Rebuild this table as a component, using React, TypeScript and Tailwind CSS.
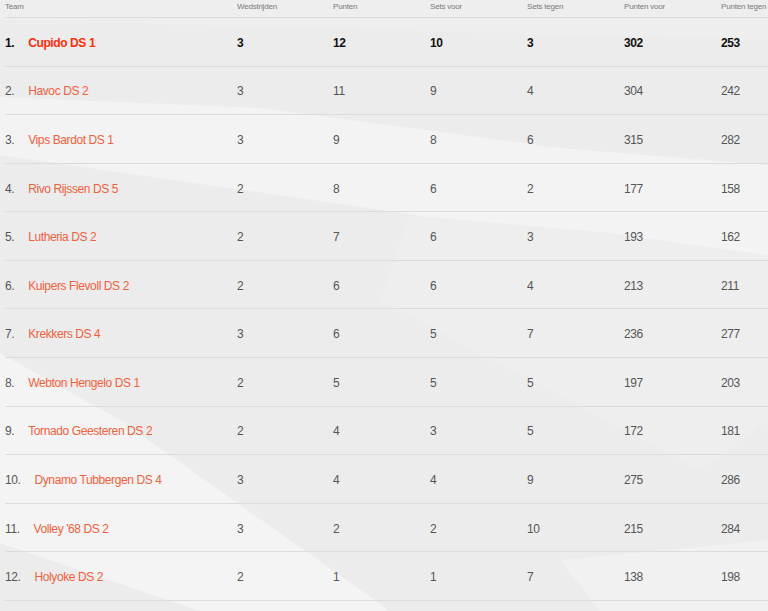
import React from 'react';

interface Row {
    pos: number;
    team: string;
    played: number;
    points: number;
    setsFor: number;
    setsAgainst: number;
    ptsFor: number;
    ptsAgainst: number;
}

const rows: Row[] = [
    { pos: 1, team: 'Cupido DS 1', played: 3, points: 12, setsFor: 10, setsAgainst: 3, ptsFor: 302, ptsAgainst: 253 },
    { pos: 2, team: 'Havoc DS 2', played: 3, points: 11, setsFor: 9, setsAgainst: 4, ptsFor: 304, ptsAgainst: 242 },
    { pos: 3, team: 'Vips Bardot DS 1', played: 3, points: 9, setsFor: 8, setsAgainst: 6, ptsFor: 315, ptsAgainst: 282 },
    { pos: 4, team: 'Rivo Rijssen DS 5', played: 2, points: 8, setsFor: 6, setsAgainst: 2, ptsFor: 177, ptsAgainst: 158 },
    { pos: 5, team: 'Lutheria DS 2', played: 2, points: 7, setsFor: 6, setsAgainst: 3, ptsFor: 193, ptsAgainst: 162 },
    { pos: 6, team: 'Kuipers Flevoll DS 2', played: 2, points: 6, setsFor: 6, setsAgainst: 4, ptsFor: 213, ptsAgainst: 211 },
    { pos: 7, team: 'Krekkers DS 4', played: 3, points: 6, setsFor: 5, setsAgainst: 7, ptsFor: 236, ptsAgainst: 277 },
    { pos: 8, team: 'Webton Hengelo DS 1', played: 2, points: 5, setsFor: 5, setsAgainst: 5, ptsFor: 197, ptsAgainst: 203 },
    { pos: 9, team: 'Tornado Geesteren DS 2', played: 2, points: 4, setsFor: 3, setsAgainst: 5, ptsFor: 172, ptsAgainst: 181 },
    { pos: 10, team: 'Dynamo Tubbergen DS 4', played: 3, points: 4, setsFor: 4, setsAgainst: 9, ptsFor: 275, ptsAgainst: 286 },
    { pos: 11, team: "Volley '68 DS 2", played: 3, points: 2, setsFor: 2, setsAgainst: 10, ptsFor: 215, ptsAgainst: 284 },
    { pos: 12, team: 'Holyoke DS 2', played: 2, points: 1, setsFor: 1, setsAgainst: 7, ptsFor: 138, ptsAgainst: 198 },
];

const headers = ['Wedstrijden', 'Punten', 'Sets voor', 'Sets tegen', 'Punten voor', 'Punten tegen'];

const gridCols = 'grid grid-cols-[232px_96px_97px_97px_97px_97px_1fr]';

// low-poly backdrop behind the table
const Backdrop: React.FC = () => (
    <svg className="absolute inset-0 pointer-events-none" width="768" height="611" viewBox="0 0 768 611">
        <polygon points="0,97 260,108 560,148 768,165 768,255 600,232 430,217 0,155" fill="#ffffff" opacity="0.4" />
        <polygon points="410,214 768,250 768,420 700,470 380,300" fill="#ffffff" opacity="0.15" />
        <polygon points="0,353 120,420 390,611 200,611 0,543" fill="#ffffff" opacity="0.45" />
        <polygon points="560,560 768,540 768,611 600,611" fill="#ffffff" opacity="0.25" />
        <polygon points="0,0 768,0 768,40 0,20" fill="#ffffff" opacity="0.12" />
    </svg>
);

const App: React.FC = () => {
    return (
        <div className="relative w-[768px] h-[611px] overflow-hidden bg-[#ececec]" style={{ fontFamily: '"Liberation Sans", Arial, sans-serif' }}>
            <Backdrop />

            <div className="relative w-[800px] pl-[5px]">
                {/* Header */}
                <div className={`${gridCols} h-[18px] border-b border-[#dcdcdc] text-[8px] tracking-[-0.2px] text-[#7a7a7a] pt-[1px]`}>
                    <div>Team</div>
                    {headers.map(h => (
                        <div key={h}>{h}</div>
                    ))}
                </div>

                {/* Rows */}
                {rows.map(r => {
                    const top = r.pos === 1;
                    return (
                        <div
                            key={r.pos}
                            className={`${gridCols} h-[48.58px] pt-[2px] items-center border-b border-[#dcdcdc] text-[12px] tracking-[-0.4px] ${top ? 'font-bold text-[#111]' : 'text-[#555]'}`}
                        >
                            <div className="flex items-center">
                                <span className="mr-[14px]">{r.pos}.</span>
                                <span className={top ? 'text-[#ff2d0a]' : 'text-[#f2603c]'}>{r.team}</span>
                            </div>
                            <div>{r.played}</div>
                            <div>{r.points}</div>
                            <div>{r.setsFor}</div>
                            <div>{r.setsAgainst}</div>
                            <div>{r.ptsFor}</div>
                            <div>{r.ptsAgainst}</div>
                        </div>
                    );
                })}
            </div>
        </div>
    );
};

export default App;
